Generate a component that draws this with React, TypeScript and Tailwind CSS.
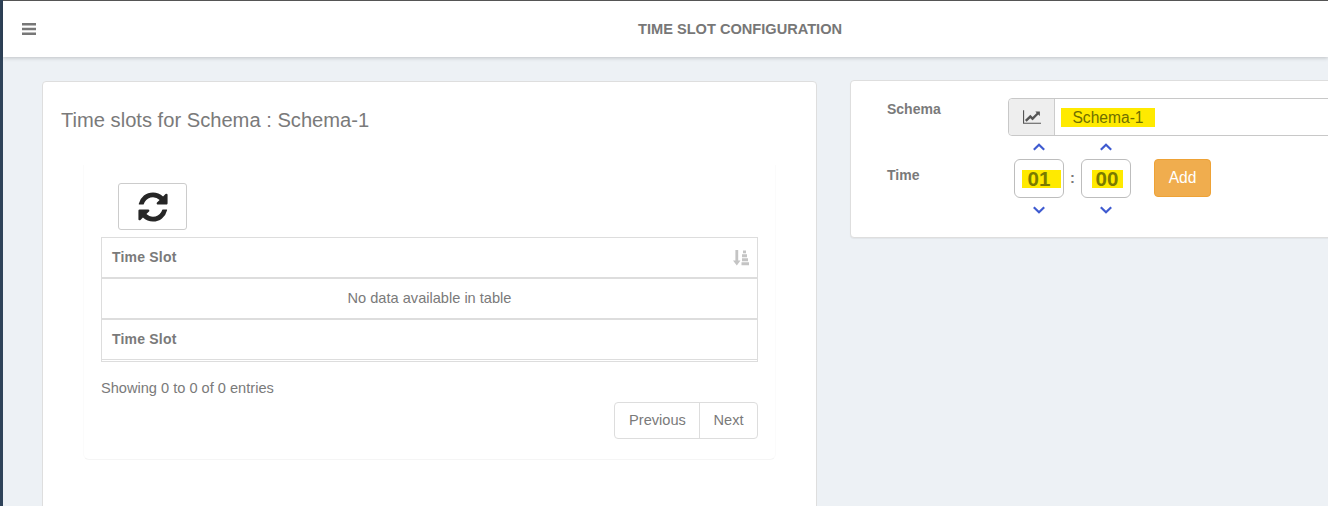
const Chevron = ({ up }: { up?: boolean }) => (
  <svg width="12" height="8" viewBox="0 0 12 8" className="text-[#3f5bd0]">
    <path d={up ? 'M0.8 6.8 L6 1.8 L11.2 6.8' : 'M0.8 1.2 L6 6.2 L11.2 1.2'} fill="none" stroke="currentColor" strokeWidth="2.2" />
  </svg>
)

const Spinner = ({ value, wide }: { value: string; wide?: boolean }) => (
  <div className="flex flex-col items-center w-[50px]">
    <div className="h-[8px] flex -mt-[16px] mb-[8px]"><Chevron up /></div>
    <div className="w-[50px] h-[39px] border border-[#bdbdbd] rounded-md flex items-center justify-center bg-white">
      <span className={`bg-[#ffea00] text-[#7a7a00] font-bold text-[20.5px] leading-[18px] ${wide ? 'w-[39px] ml-[4px] pl-[6px]' : 'w-[31px] ml-[2px] pl-[4px]'}`}>{value}</span>
    </div>
    <div className="h-[8px] flex mt-[8px]"><Chevron /></div>
  </div>
)

export default function App() {
  return (
    <div className="h-[506px] overflow-hidden bg-[#edf1f5] text-[#7a7a7a] flex font-['Liberation_Sans',sans-serif] text-[14.6px]">
      <div className="w-[3px] shrink-0 bg-[#2f4359]" />
      <div className="flex-1 min-w-0 flex flex-col">
        <header className="h-[57px] shrink-0 bg-white border-t border-[#555555] shadow-[0_1px_4px_rgba(0,0,0,0.2)] flex items-center relative">
          <svg width="14" height="12" viewBox="0 0 14 12" className="ml-[19px] text-[#777777]">
            <path d="M0 0h14v2.4H0z M0 4.8h14v2.4H0z M0 9.6h14v2.4H0z" fill="currentColor" />
          </svg>
          <h1 className="absolute left-[635px] top-[20px] text-[14.6px] leading-4 font-bold text-[#777777]">TIME SLOT CONFIGURATION</h1>
        </header>

        <main className="flex-1 flex items-start pl-[39px] pt-[23px] gap-[33px] overflow-hidden">
          <section className="w-[775px] shrink-0 h-[500px] mt-px bg-white border border-[#dedede] rounded-[4px] px-[18px]">
            <h2 className="text-[20.15px] leading-6 mt-[26px] text-[#7a7a7a]">Time slots for Schema : Schema-1</h2>
            <div className="mx-[22px] mt-[33px] h-[295px] rounded-b-[6px] border-x border-b border-x-[#fbfbfb] border-b-[#f5f5f5] pt-[18px] px-[17px]">
              <button className="ml-[17px] w-[69px] h-[47px] border border-[#cccccc] rounded-[3px] flex items-center justify-center">
                <svg width="34" height="34" viewBox="0 0 1792 1792" className="text-[#262626]">
                  <path fill="currentColor" d="M1639 1056q0 5-1 7-64 268-268 434.5t-478 166.5q-146 0-282.5-55t-243.5-157l-129 129q-19 19-45 19t-45-19-19-45v-448q0-26 19-45t45-19h448q26 0 45 19t19 45-19 45l-137 137q71 66 161 102t187 36q134 0 250-65t186-179q11-17 53-117 8-23 30-23h192q13 0 22.5 9.5t9.5 22.5zm25-800v448q0 26-19 45t-45 19h-448q-26 0-45-19t-19-45 19-45l138-138q-148-137-349-137-134 0-250 65t-186 179q-11 17-53 117-8 23-30 23h-199q-13 0-22.5-9.5t-9.5-22.5v-7q65-268 270-434.5t480-166.5q146 0 284 55.5t245 156.5l130-129q19-19 45-19t45 19 19 45z" />
                </svg>
              </button>
              <div className="mt-[7px] w-[657px] h-[125px] border-x border-t border-b border-[#dddddd]">
                <div className="h-[41px] flex items-center border-b-2 border-[#dddddd]">
                  <span className="pl-[10px] text-[14px] font-bold tracking-[0.2px]">Time Slot</span>
                  <svg width="16" height="16" viewBox="0 0 16 16" className="ml-auto mr-[8px] text-[#c4c4c4]">
                    <path d="M2.4 0h2.8v10.5h2.3L3.8 15.5 0 10.5h2.4z M10 0.5h3v2.8h-3z M9 4.3h5v3h-5z M9 8.3h6v3h-6z M8.5 12.3h7.5v3h-7.5z" fill="currentColor" />
                  </svg>
                </div>
                <div className="h-[41px] flex items-center justify-center border-b-2 border-[#dddddd]">
                  No data available in table
                </div>
                <div className="h-[40px] flex items-center border-b border-[#dddddd]">
                  <span className="pl-[10px] text-[14px] font-bold tracking-[0.2px]">Time Slot</span>
                </div>
              </div>
              <p className="mt-[16px] leading-5">Showing 0 to 0 of 0 entries</p>
              <div className="w-[657px] flex justify-end mt-[4px]">
                <div className="flex h-[37px] border border-[#dddddd] rounded-[4px]">
                  <span className="w-[85px] pl-px flex items-center justify-center border-r border-[#dddddd]">Previous</span>
                  <span className="w-[57px] flex items-center justify-center">Next</span>
                </div>
              </div>
            </div>
          </section>

          <section className="w-[600px] shrink-0 h-[158px] bg-white border border-[#dedede] rounded-[4px] shadow-[0_1px_1px_rgba(0,0,0,0.05)]">
            <div className="flex pt-[17px]">
              <span className="ml-[36px] w-[121px] text-[14px] font-bold leading-5 mt-px">Schema</span>
              <div className="flex h-[38px] flex-1 border border-[#c8c8c8] rounded-l-[4px]">
                <div className="w-[46px] bg-[#eeeeee] border-r border-[#cccccc] rounded-l-[4px] flex items-center justify-center">
                  <svg width="18" height="16" viewBox="0 0 2048 1792" className="text-[#555555]">
                    <path fill="currentColor" d="M2048 1536v128h-2048v-1536h128v1408h1920zm-128-1248v435q0 21-19.5 29.5t-35.5-7.5l-121-121-633 633q-10 10-23 10t-23-10l-233-233-416 416-192-192 585-585q10-10 23-10t23 10l233 233 464-464-121-121q-16-16-7.5-35.5t29.5-19.5h435q14 0 23 9t9 23z" />
                  </svg>
                </div>
                <div className="flex items-center pl-[6px]">
                  <span className="bg-[#ffea00] text-[#6f6f00] w-[94px] text-center text-[15.6px] leading-[19px]">Schema-1</span>
                </div>
              </div>
            </div>
            <div className="flex mt-[23px]">
              <span className="ml-[36px] w-[127px] text-[14px] font-bold leading-5 mt-[6px]">Time</span>
              <Spinner value="01" wide />
              <span className="w-[17px] text-center font-bold leading-[39px]">:</span>
              <Spinner value="00" />
              <button className="ml-[23px] w-[57px] h-[38px] bg-[#f0ad4e] border border-[#eea236] rounded-[4px] text-white text-[15.6px]">Add</button>
            </div>
          </section>
        </main>
      </div>
    </div>
  )
}
